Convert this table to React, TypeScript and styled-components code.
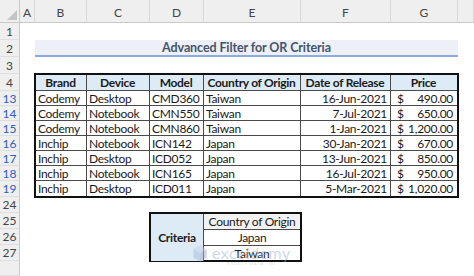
import React from 'react'
import styled, { createGlobalStyle } from 'styled-components'

const GlobalStyle = createGlobalStyle`
  html,
  body {
    margin: 0;
    padding: 0;
    background: #fff;
  }
  body {
    font-family: Lato, 'Open Sans', sans-serif;
    overflow: hidden;
  }
`

const columnLetters = ['A', 'B', 'C', 'D', 'E', 'F', 'G', '']

const rowHeads = [
  { label: '1' },
  { label: '2' },
  { label: '3' },
  { label: '4' },
  { label: '13', filtered: true },
  { label: '14', filtered: true },
  { label: '15', filtered: true },
  { label: '16', filtered: true },
  { label: '17', filtered: true },
  { label: '18', filtered: true },
  { label: '19', filtered: true },
  { label: '24' },
  { label: '25' },
  { label: '26' },
  { label: '27' },
  { label: '' },
]

const tableHeads = ['Brand', 'Device', 'Model', 'Country of Origin', 'Date of Release', 'Price']

const products = [
  ['Codemy', 'Desktop', 'CMD360', 'Taiwan', '16-Jun-2021', '490.00'],
  ['Codemy', 'Notebook', 'CMN550', 'Taiwan', '7-Jul-2021', '650.00'],
  ['Codemy', 'Notebook', 'CMN860', 'Taiwan', '1-Jan-2021', '1,200.00'],
  ['Inchip', 'Notebook', 'ICN142', 'Japan', '30-Jan-2021', '670.00'],
  ['Inchip', 'Desktop', 'ICD052', 'Japan', '13-Jun-2021', '850.00'],
  ['Inchip', 'Notebook', 'ICN165', 'Japan', '16-Jul-2021', '950.00'],
  ['Inchip', 'Desktop', 'ICD011', 'Japan', '5-Mar-2021', '1,020.00'],
]

const criteria = ['Japan', 'Taiwan']

export default function App() {
  return (
    <>
      <GlobalStyle />
      <Sheet>
        <Corner />
        {columnLetters.map((letter, index) => (
          <ColHead key={index}>{letter}</ColHead>
        ))}
        {rowHeads.map(({ label, filtered }, index) => (
          <RowHead key={index} $row={index + 2} $filtered={filtered}>
            {label}
          </RowHead>
        ))}

        <TitleBar>Advanced Filter for OR Criteria</TitleBar>

        <DataTable>
          {tableHeads.map((head) => (
            <HeadCell key={head}>{head}</HeadCell>
          ))}
          {products.map(([brand, device, model, country, date, price]) => (
            <React.Fragment key={model}>
              <Cell>{brand}</Cell>
              <Cell>{device}</Cell>
              <Cell>{model}</Cell>
              <Cell>{country}</Cell>
              <Cell $align="right">{date}</Cell>
              <PriceCell>
                <span>$</span>
                <span>{price}</span>
              </PriceCell>
            </React.Fragment>
          ))}
        </DataTable>

        <CriteriaBox>
          <CriteriaLabel>Criteria</CriteriaLabel>
          <CriteriaHead>Country of Origin</CriteriaHead>
          {criteria.map((value) => (
            <CriteriaValue key={value}>{value}</CriteriaValue>
          ))}
        </CriteriaBox>

        <Watermark>
          <svg width="14" height="17" viewBox="0 0 14 17">
            <path d="M7 0.5 L13.5 4.2 V12.8 L7 16.5 L0.5 12.8 V4.2 Z" fill="#aabbd6" />
            <path d="M7 8.5 L13.5 4.2 V12.8 L7 16.5 Z" fill="#9aaecd" />
            <path d="M7 8.5 L0.5 4.2 L7 0.5 L13.5 4.2 Z" fill="#c3d0e3" />
          </svg>
          <WatermarkText>
            <WatermarkName>exceldemy</WatermarkName>
            <WatermarkTag>EXCEL · DATA · BI</WatermarkTag>
          </WatermarkText>
        </Watermark>
      </Sheet>
    </>
  )
}

const Sheet = styled.div`
  position: relative;
  display: grid;
  grid-template-columns: 20px 15px 52px 63px 54px 97px 90px 67px 1fr;
  grid-template-rows: 23px 17px 17px 17px 17px repeat(6, 15px) 16px repeat(4, 16px) 1fr;
  width: 474px;
  height: 276px;
  background: #fff;
  color: #1a1a1a;
  font-size: 12px;
  letter-spacing: -0.3px;
`

const Corner = styled.div`
  position: relative;
  grid-row: 1;
  grid-column: 1;
  background: #efefef;
  border-right: 1px solid #c9c9c9;
  border-bottom: 1px solid #c9c9c9;

  &::after {
    content: '';
    position: absolute;
    right: 2px;
    bottom: 2px;
    border-style: solid;
    border-width: 0 0 10px 10px;
    border-color: transparent transparent #c4c4c4 transparent;
  }
`

const ColHead = styled.div`
  grid-row: 1;
  display: flex;
  align-items: flex-end;
  justify-content: center;
  padding-bottom: 2px;
  background: #efefef;
  border-right: 1px solid #d8d8d8;
  border-bottom: 1px solid #c9c9c9;
  color: #444;
  font-size: 12px;
  letter-spacing: 0;
`

const RowHead = styled.div<{ $row: number; $filtered?: boolean }>`
  grid-column: 1;
  grid-row: ${({ $row }) => $row};
  display: flex;
  align-items: center;
  justify-content: center;
  background: #efefef;
  border-right: 1px solid #c9c9c9;
  border-bottom: 1px solid #dedede;
  color: ${({ $filtered }) => ($filtered ? '#2e5cc5' : '#444')};
  font-size: 12px;
  letter-spacing: 0;
`

const TitleBar = styled.div`
  grid-column: 3 / 9;
  grid-row: 3;
  display: flex;
  align-items: center;
  justify-content: center;
  background: #edf0f6;
  border-bottom: 2px solid #8faadc;
  color: #44546a;
  font-size: 12.5px;
  font-weight: 700;
  letter-spacing: -0.1px;
`

const DataTable = styled.div`
  grid-column: 3 / 9;
  grid-row: 5 / 13;
  display: grid;
  grid-template-columns: 51px 63px 54px 97px 90px 1fr;
  grid-template-rows: 16px repeat(7, 15px);
  border: 1px solid #111;
  box-shadow: 0 0 0 1px #111;

  & > *:nth-child(6n) {
    border-right: none;
  }
  & > *:nth-last-child(-n + 6) {
    border-bottom: none;
  }
`

const Cell = styled.div<{ $align?: 'left' | 'right' }>`
  display: flex;
  align-items: center;
  justify-content: ${({ $align }) => ($align === 'right' ? 'flex-end' : 'flex-start')};
  padding: 0 3px 0 2px;
  border-right: 1px solid #4a4a4a;
  border-bottom: 1px solid #4a4a4a;
  white-space: nowrap;
  overflow: hidden;
`

const HeadCell = styled(Cell)`
  justify-content: center;
  background: #ddebf7;
  font-weight: 700;
`

const PriceCell = styled(Cell)`
  justify-content: space-between;
  padding: 0 4px 0 6px;
`

const CriteriaBox = styled.div`
  grid-column: 5 / 7;
  grid-row: 14 / 17;
  display: grid;
  grid-template-columns: 53px 1fr;
  grid-template-rows: repeat(3, 1fr);
  border: 1px solid #111;
  box-shadow: 0 0 0 1px #111;
`

const CriteriaLabel = styled.div`
  grid-row: 1 / 4;
  display: flex;
  align-items: center;
  justify-content: center;
  background: #ddebf7;
  border-right: 1px solid #4a4a4a;
  font-weight: 700;
`

const CriteriaValue = styled.div`
  display: flex;
  align-items: center;
  justify-content: center;
  border-bottom: 1px solid #4a4a4a;

  &:last-child {
    border-bottom: none;
  }
`

const CriteriaHead = styled(CriteriaValue)`
  background: #f2f2f2;
`

const Watermark = styled.div`
  position: absolute;
  left: 193px;
  top: 245px;
  display: flex;
  align-items: flex-start;
  gap: 5px;
  opacity: 0.5;
  pointer-events: none;
  letter-spacing: 0;
`

const WatermarkText = styled.div`
  display: flex;
  flex-direction: column;
  align-items: center;
  line-height: 1;
`

const WatermarkName = styled.span`
  color: #9fb2cf;
  font-size: 16px;
  letter-spacing: 0.5px;
`

const WatermarkTag = styled.span`
  margin-top: 1px;
  color: #a9b8cf;
  font-size: 4px;
  letter-spacing: 1px;
`
